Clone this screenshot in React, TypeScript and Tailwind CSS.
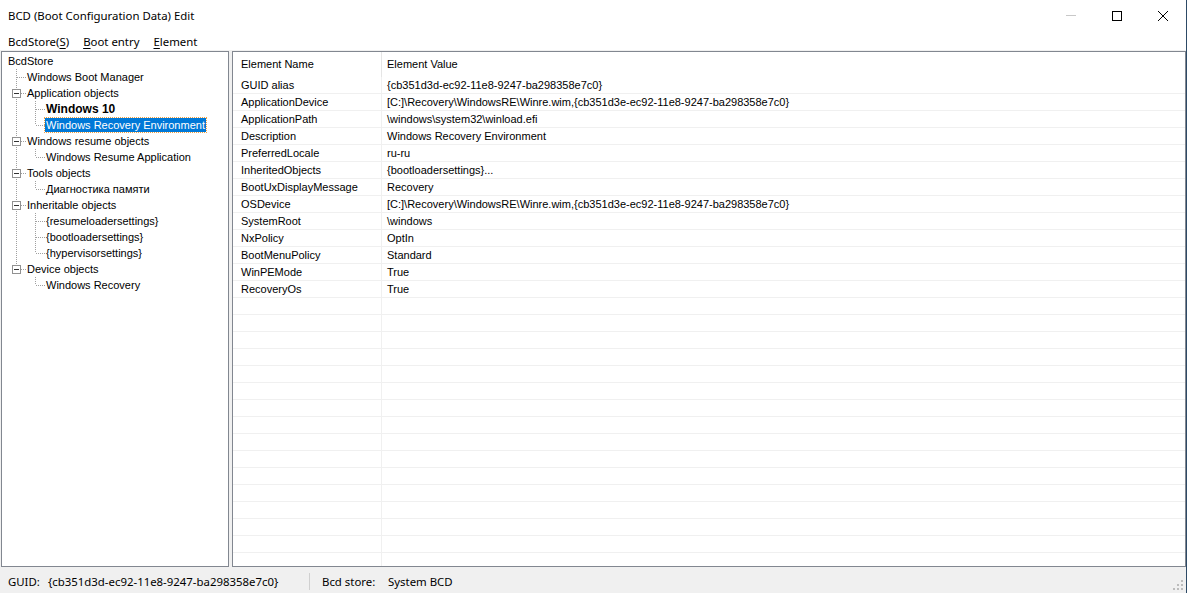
import React from 'react';

type Node = { label: string; level: number; guides: ('v' | 't' | 'l' | ' ')[]; expander?: boolean; bold?: boolean; selected?: boolean };

const tree: Node[] = [
  { label: 'BcdStore', level: 0, guides: [] },
  { label: 'Windows Boot Manager', level: 1, guides: ['t'] },
  { label: 'Application objects', level: 1, guides: ['t'], expander: true },
  { label: 'Windows 10', level: 2, guides: ['v', 't'], bold: true },
  { label: 'Windows Recovery Environment', level: 2, guides: ['v', 'l'], selected: true },
  { label: 'Windows resume objects', level: 1, guides: ['t'], expander: true },
  { label: 'Windows Resume Application', level: 2, guides: ['v', 'l'] },
  { label: 'Tools objects', level: 1, guides: ['t'], expander: true },
  { label: 'Диагностика памяти', level: 2, guides: ['v', 'l'] },
  { label: 'Inheritable objects', level: 1, guides: ['t'], expander: true },
  { label: '{resumeloadersettings}', level: 2, guides: ['v', 't'] },
  { label: '{bootloadersettings}', level: 2, guides: ['v', 't'] },
  { label: '{hypervisorsettings}', level: 2, guides: ['v', 'l'] },
  { label: 'Device objects', level: 1, guides: ['l'], expander: true },
  { label: 'Windows Recovery', level: 2, guides: [' ', 'l'] },
];

const rows: [string, string][] = [
  ['GUID alias', '{cb351d3d-ec92-11e8-9247-ba298358e7c0}'],
  ['ApplicationDevice', '[C:]\\Recovery\\WindowsRE\\Winre.wim,{cb351d3e-ec92-11e8-9247-ba298358e7c0}'],
  ['ApplicationPath', '\\windows\\system32\\winload.efi'],
  ['Description', 'Windows Recovery Environment'],
  ['PreferredLocale', 'ru-ru'],
  ['InheritedObjects', '{bootloadersettings}...'],
  ['BootUxDisplayMessage', 'Recovery'],
  ['OSDevice', '[C:]\\Recovery\\WindowsRE\\Winre.wim,{cb351d3e-ec92-11e8-9247-ba298358e7c0}'],
  ['SystemRoot', '\\windows'],
  ['NxPolicy', 'OptIn'],
  ['BootMenuPolicy', 'Standard'],
  ['WinPEMode', 'True'],
  ['RecoveryOs', 'True'],
];

const Guide: React.FC<{ kind: 'v' | 't' | 'l' | ' '; expander?: boolean }> = ({ kind, expander }) => (
  <svg width="19" height="16" className="shrink-0" shapeRendering="crispEdges">
    {(kind === 'v' || kind === 't') && <line x1="9.5" y1="0" x2="9.5" y2="16" stroke="#a0a0a0" strokeDasharray="1 1" />}
    {kind === 'l' && <line x1="9.5" y1="0" x2="9.5" y2="8" stroke="#a0a0a0" strokeDasharray="1 1" />}
    {(kind === 't' || kind === 'l') && <line x1="10" y1="8.5" x2="19" y2="8.5" stroke="#a0a0a0" strokeDasharray="1 1" />}
    {expander && (
      <g>
        <rect x="5.5" y="4.5" width="8" height="8" fill="#fff" stroke="#919191" />
        <line x1="7" y1="8.5" x2="12" y2="8.5" stroke="#333" />
      </g>
    )}
  </svg>
);

const U: React.FC<{ children: React.ReactNode }> = ({ children }) => <span className="underline underline-offset-2">{children}</span>;

const App: React.FC = () => {
  const empty = Array.from({ length: 17 });
  return (
    <div className="w-[1187px] h-[593px] flex flex-col bg-white border-r border-[#2d4a66] overflow-hidden text-black" style={{ fontFamily: '"Liberation Sans", Arial, sans-serif' }}>
      {/* title bar */}
      <div className="h-[31px] flex items-center justify-between shrink-0">
        <span className="pl-2 text-[11.4px] font-['Noto_Sans',sans-serif]">BCD (Boot Configuration Data) Edit</span>
        <div className="flex h-full">
          <div className="w-[46px] h-full flex items-center justify-center">
            <div className="w-[10px] h-px bg-[#c8c8c8]" />
          </div>
          <div className="w-[46px] h-full flex items-center justify-center">
            <div className="w-[10px] h-[10px] border border-black" />
          </div>
          <div className="w-[46px] h-full flex items-center justify-center">
            <svg width="10" height="10" viewBox="0 0 10 10"><path d="M0 0L10 10M10 0L0 10" stroke="#000" strokeWidth="1" /></svg>
          </div>
        </div>
      </div>

      {/* menu bar */}
      <div className="h-[19px] flex items-center gap-[14px] pl-2 pt-[2px] text-[11.4px] font-['Noto_Sans',sans-serif] shrink-0">
        <span>BcdStore(<U>S</U>)</span>
        <span><U>B</U>oot entry</span>
        <span><U>E</U>lement</span>
      </div>

      {/* main */}
      <div className="h-[520px] bg-[#f0f0f0] flex pt-px pb-[3px] pl-px gap-[3px] shrink-0">
        {/* tree */}
        <div className="w-[228px] h-full bg-white border border-[#828790] pt-px pl-[5px] text-[11px] overflow-hidden">
          {tree.map((n, i) => (
            <div key={i} className="h-[16px] flex items-center whitespace-nowrap">
              {n.guides.map((g, j) => (
                <Guide key={j} kind={g} expander={j === 0 && n.expander} />
              ))}
              <span
                className={
                  'px-[1px] leading-[14px] ' +
                  (n.bold ? 'font-bold text-[12px] ' : '') +
                  (n.selected ? 'bg-[#0078d7] text-white outline outline-1 outline-dotted outline-[#f0a040]' : '')
                }
              >
                {n.label}
              </span>
            </div>
          ))}
        </div>

        {/* list view */}
        <div className="flex-1 h-full bg-white border border-[#828790] text-[11px] overflow-hidden">
          <div className="h-[25px] flex items-center">
            <div className="w-[149px] h-full flex items-center pl-2 border-r border-[#e5e5e5]">Element Name</div>
            <div className="flex-1 h-full flex items-center pl-[5px]">Element Value</div>
          </div>
          {rows.map(([k, v]) => (
            <div key={k} className="h-[17px] flex border-b border-[#f0f0f0]">
              <div className="w-[149px] pl-2 pt-px flex items-center border-r border-[#f0f0f0] whitespace-nowrap">{k}</div>
              <div className="flex-1 pl-[5px] pt-px flex items-center whitespace-nowrap">{v}</div>
            </div>
          ))}
          {empty.map((_, i) => (
            <div key={i} className="h-[17px] flex border-b border-[#f0f0f0]">
              <div className="w-[149px] border-r border-[#f0f0f0]" />
              <div className="flex-1" />
            </div>
          ))}
        </div>
      </div>

      {/* status bar */}
      <div className="h-[23px] bg-[#f0f0f0] flex items-center text-[11.4px] font-['Noto_Sans',sans-serif] shrink-0 relative">
        <div className="w-[310px] flex items-center pl-2 border-r border-[#d0d0d0] h-[17px]">
          <span className="w-[40px]">GUID:</span>
          <span>{'{cb351d3d-ec92-11e8-9247-ba298358e7c0}'}</span>
        </div>
        <div className="flex items-center pl-3">
          <span className="w-[66px]">Bcd store:</span>
          <span>System BCD</span>
        </div>
        <svg width="11" height="11" className="absolute right-[2px] bottom-[2px]">
          {[[8, 0], [8, 4], [4, 4], [8, 8], [4, 8], [0, 8]].map(([x, y], i) => (
            <rect key={i} x={x} y={y} width="2" height="2" fill="#bcbcbc" />
          ))}
        </svg>
      </div>
    </div>
  );
};

export default App;
